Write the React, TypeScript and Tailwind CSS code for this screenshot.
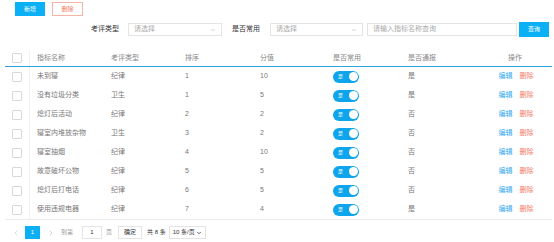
import { ChevronDown, ChevronLeft, ChevronRight } from "lucide-react";

type Row = {
  name: string;
  type: string;
  order: number;
  score: number;
  report: string;
};

const rows: Row[] = [
  { name: "未到寝", type: "纪律", order: 1, score: 10, report: "是" },
  { name: "没有垃圾分类", type: "卫生", order: 1, score: 5, report: "是" },
  { name: "熄灯后活动", type: "纪律", order: 2, score: 2, report: "否" },
  { name: "寝室内堆放杂物", type: "卫生", order: 3, score: 2, report: "否" },
  { name: "寝室抽烟", type: "纪律", order: 4, score: 10, report: "否" },
  { name: "故意破坏公物", type: "纪律", order: 5, score: 5, report: "否" },
  { name: "熄灯后打电话", type: "纪律", order: 6, score: 5, report: "否" },
  { name: "使用违规电器", type: "纪律", order: 7, score: 4, report: "是" },
];

const cols = "grid grid-cols-[25px_74px_74px_75px_73px_75px_77px_1fr] items-center";

function Checkbox() {
  return <div className="w-[10px] h-[10px] border border-[#d9d9d9] rounded-[1px] bg-white mx-auto" />;
}

function Switch() {
  return (
    <div className="w-[26px] h-[12px] rounded-full bg-[#0ea5ec] flex items-center justify-between pl-[5px] pr-[1.5px]">
      <span className="text-[5px] leading-none text-white">是</span>
      <span className="w-[9px] h-[9px] rounded-full bg-white" />
    </div>
  );
}

function Select({ width }: { width: string }) {
  return (
    <div className={`${width} h-[13px] border border-[#e4e4e4] flex items-center justify-between px-[5px] text-[#aaa]`}>
      <span>请选择</span>
      <ChevronDown size={6} strokeWidth={3} className="text-[#c0c0c0]" />
    </div>
  );
}

export default function App() {
  return (
    <div
      className="w-[554px] h-[242px] bg-white overflow-hidden text-[7px] text-[#777]"
      style={{ fontFamily: '"Liberation Sans", "Noto Sans CJK SC", sans-serif' }}
    >
      {/* top buttons */}
      <div className="flex gap-[7px] pl-[15px] pt-[2px]">
        <button className="w-[30px] h-[14px] bg-[#0bb0f5] text-white text-[6px]">新增</button>
        <button className="w-[31px] h-[14px] border border-[#f6b4a6] text-[#f47a63] text-[6px]">删除</button>
      </div>

      {/* filters */}
      <div className="flex items-center mt-[6px] h-[15px]">
        <span className="ml-[91px] w-[37px] text-[#333]">考评类型</span>
        <Select width="w-[94px]" />
        <span className="ml-[10px] w-[38px] text-[#333]">是否常用</span>
        <Select width="w-[93px]" />
        <div className="ml-[4px] w-[150px] h-[13px] border border-[#e4e4e4] flex items-center px-[5px] text-[#aaa]">
          请输入指标名称查询
        </div>
        <button className="ml-[2px] w-[30px] h-[15px] bg-[#0bb0f5] text-white text-[6px]">查询</button>
      </div>

      {/* table */}
      <div className="ml-[5px] w-[547px] mt-[13px]">
        <div className={`${cols} h-[17px] border-b-[1.5px] border-[#2ea3dc] text-[#888]`}>
          <div className="h-full flex items-center border-r border-[#f2f2f2]"><Checkbox /></div>
          <div className="pl-[7px]">指标名称</div>
          <div className="pl-[7px]">考评类型</div>
          <div className="pl-[7px]">排序</div>
          <div className="pl-[7px]">分值</div>
          <div className="pl-[7px]">是否常用</div>
          <div className="pl-[7px]">是否通报</div>
          <div className="text-center">操作</div>
        </div>
        {rows.map((r, i) => (
          <div key={i} className={`${cols} h-[19px]`}>
            <div className="h-full flex items-center border-r border-[#f2f2f2]"><Checkbox /></div>
            <div className="pl-[7px]">{r.name}</div>
            <div className="pl-[7px]">{r.type}</div>
            <div className="pl-[7px]">{r.order}</div>
            <div className="pl-[7px]">{r.score}</div>
            <div className="pl-[7px]"><Switch /></div>
            <div className="pl-[7px]">{r.report}</div>
            <div className="flex justify-center gap-[7px] pl-[2px]">
              <span className="text-[#33a9f0]">编辑</span>
              <span className="text-[#f47a63]">删除</span>
            </div>
          </div>
        ))}
        <div className="border-b border-[#ececec]" />
      </div>

      {/* pagination */}
      <div className="flex items-center h-[13px] mt-[6px] text-[6px] text-[#666]">
        <ChevronLeft size={8} className="ml-[12px] text-[#ccc]" />
        <div className="ml-[5px] w-[15px] h-[13px] bg-[#0bb0f5] text-white flex items-center justify-center">1</div>
        <ChevronRight size={8} className="ml-[7px] text-[#bbb]" />
        <span className="ml-[6px] text-[#999]">到第</span>
        <div className="ml-[9px] w-[20px] h-[13px] border border-[#e4e4e4] flex items-center justify-center text-[#333]">1</div>
        <span className="ml-[4px] text-[#999]">页</span>
        <div className="ml-[6px] w-[24px] h-[13px] border border-[#e4e4e4] flex items-center justify-center text-[#333]">确定</div>
        <span className="ml-[5px] text-[#333]">共 8 条</span>
        <div className="ml-[3px] w-[37px] h-[13px] border border-[#e4e4e4] flex items-center justify-between px-[3px] text-[#333]">
          <span>10 条/页</span>
          <ChevronDown size={6} strokeWidth={3} />
        </div>
      </div>
    </div>
  );
}
